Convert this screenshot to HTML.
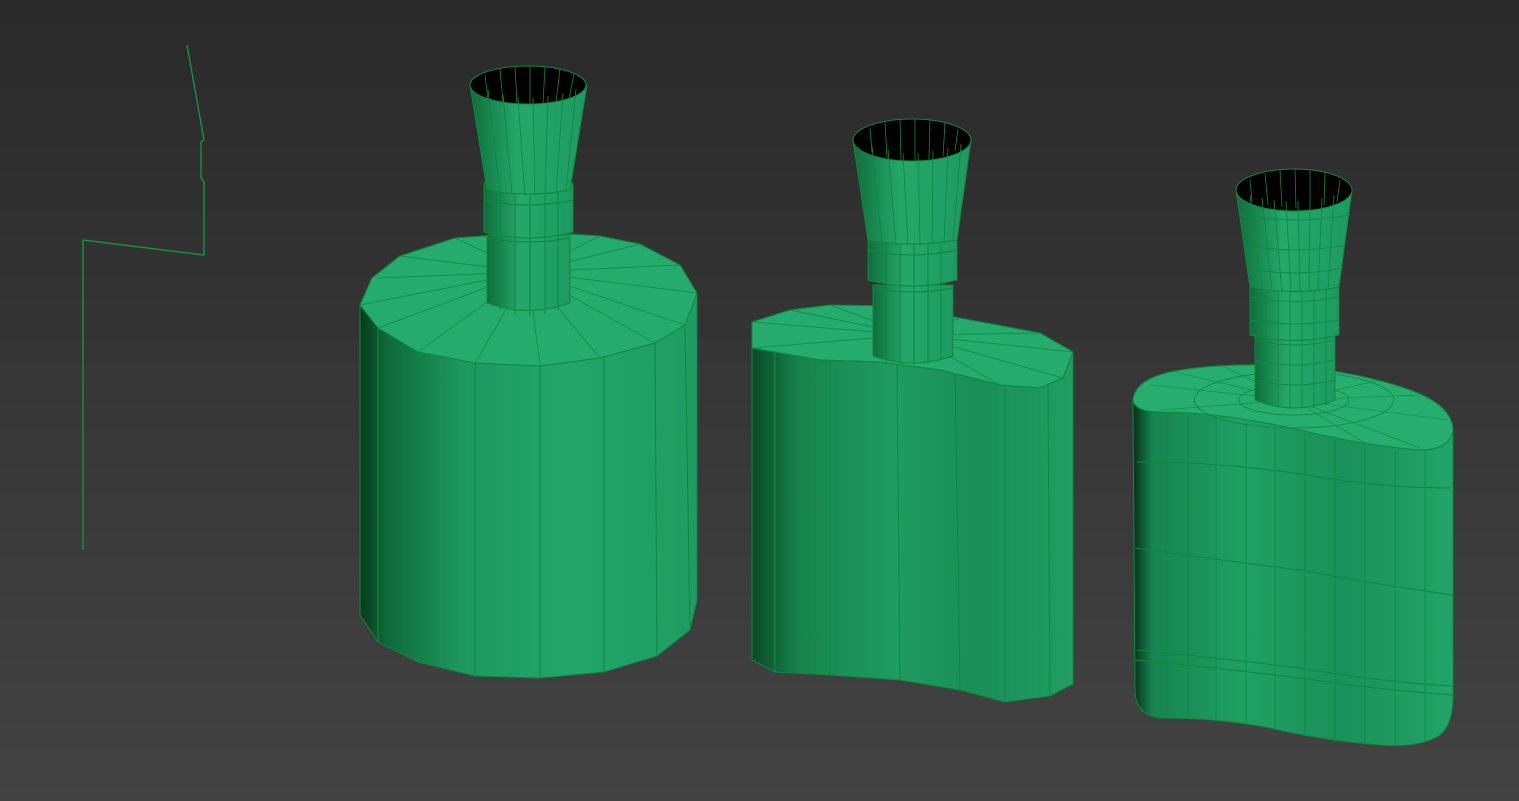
<!DOCTYPE html>
<html><head><style>html,body{margin:0;padding:0;width:1519px;height:801px;overflow:hidden;background:#333}</style></head><body>
<svg width="1519" height="801" viewBox="0 0 1519 801" xmlns="http://www.w3.org/2000/svg">
<defs>
<linearGradient id="bg" x1="0" y1="0" x2="0" y2="1"><stop offset="0" stop-color="#2a2a2a"/><stop offset="1" stop-color="#434343"/></linearGradient>
<linearGradient id="b1" x1="360" y1="0" x2="697" y2="0" gradientUnits="userSpaceOnUse"><stop offset="0" stop-color="#063a1c"/><stop offset="0.08" stop-color="#0e6a3a"/><stop offset="0.3" stop-color="#1e9860"/><stop offset="0.6" stop-color="#22a56a"/><stop offset="1" stop-color="#1f9c62"/></linearGradient>
<linearGradient id="b2" x1="752" y1="0" x2="1073" y2="0" gradientUnits="userSpaceOnUse"><stop offset="0" stop-color="#0a4a26"/><stop offset="0.15" stop-color="#17844e"/><stop offset="0.45" stop-color="#1f9c62"/><stop offset="0.7" stop-color="#1a8e58"/><stop offset="1" stop-color="#1f9e63"/></linearGradient>
<linearGradient id="b3" x1="1133" y1="0" x2="1453" y2="0" gradientUnits="userSpaceOnUse"><stop offset="0" stop-color="#053018"/><stop offset="0.06" stop-color="#178450"/><stop offset="0.35" stop-color="#20a064"/><stop offset="0.65" stop-color="#1b905a"/><stop offset="1" stop-color="#22a468"/></linearGradient>
<linearGradient id="nk" x1="0" y1="0" x2="1" y2="0"><stop offset="0" stop-color="#0f6e3c"/><stop offset="0.4" stop-color="#24a86a"/><stop offset="1" stop-color="#1e9a60"/></linearGradient>
</defs>
<rect width="1519" height="801" fill="url(#bg)"/>
<polyline points="187,45 204,140 201,142 201,178 204,182 204,255 83,240 83,550" fill="none" stroke="#109a44" stroke-width="1.3"/>
<g stroke="#0b8a3c" stroke-width="1">
<path d="M360,305 L360,615 L378,642 L418,662 L475,676 L540,678 L604,672 L657,656 L690,630 L697,600 L697,295 Z" fill="url(#b1)"/>
<path d="M360,305 L372,278 L400,256 L455,238 L540,232 L600,236 L640,244 L680,265 L697,293 L685,325 L655,343 L600,358 L540,366 L475,363 L418,352 L378,328 Z" fill="#25ab6d"/>
<path d="M378,328 L378,642 M418,352 L418,662 M475,363 L475,676 M540,366 L540,678 M604,356 L604,672 M655,343 L657,656 M685,325 L690,630" fill="none"/>
<path d="M528,272 L360,305 M528,272 L378,278 M528,272 L400,256 M528,272 L455,238 M528,272 L600,236 M528,272 L640,244 M528,272 L680,265 M528,272 L697,293 M528,272 L685,325 M528,272 L655,343 M528,272 L600,358 M528,272 L540,366 M528,272 L475,363 M528,272 L418,352 M528,272 L378,328" fill="none" stroke-width="0.7"/>
<path d="M487,235 L487,303 Q528,318 570,303 L570,235 Z" fill="url(#nk)"/>
<path d="M484,183 L484,232 Q528,244 573,232 L573,183 Z" fill="url(#nk)"/>
<path d="M484,200 Q528,210 573,200 M487,238 Q528,246 570,238 M500,190 L500,310 M515,190 L515,314 M530,190 L530,315 M545,190 L545,314 M558,190 L558,310" fill="none"/>
<path d="M470,85 L487,190 Q528,198 570,190 L587,85 Z" fill="url(#nk)"/>
<ellipse cx="528" cy="85" rx="58" ry="19" fill="#000"/>
<path d="M488,90 L500,193 M503,95 L512,195 M518,98 L525,196 M533,98 L535,196 M548,96 L545,195 M563,93 L556,193 M576,89 L566,191 M485,75 L488,100 M500,69 L503,103 M515,67 L517,104 M530,66 L530,104 M545,67 L543,104 M560,69 L556,102 M574,74 L569,99" fill="none" stroke-width="0.8"/>
<path d="M752,322 L752,660 L775,672 L830,675 L900,680 L960,690 L1005,702 L1050,696 L1073,684 L1073,352 Z" fill="url(#b2)"/>
<path d="M752,322 L790,310 L830,305 L900,306 L960,318 L1040,333 L1073,352 L1063,378 L1040,388 L1000,385 L940,370 L880,362 L820,360 L752,348 Z" fill="#25ab6d"/>
<path d="M752,348 L820,360 L880,362 L940,370 L1000,385 L1040,388 L1063,378 L1073,352" fill="none"/>
<path d="M775,352 L775,672 M830,360 L830,675 M897,364 L900,680 M955,373 L960,690 M1005,386 L1005,702 M1048,386 L1050,696" fill="none"/>
<path d="M912,335 L790,310 M912,335 L830,305 M912,335 L960,318 M912,335 L1040,333 M912,335 L1073,352 M912,335 L1063,378 M912,335 L1000,385 M912,335 L752,348 M912,335 L752,322" fill="none" stroke-width="0.7"/>
<path d="M873,285 L873,356 Q912,370 953,356 L953,285 Z" fill="url(#nk)"/>
<path d="M868,235 L868,280 Q912,292 957,280 L957,235 Z" fill="url(#nk)"/>
<path d="M868,250 Q912,260 957,250 M873,288 Q912,296 953,288 M886,240 L886,362 M900,242 L900,364 M914,242 L914,365 M928,242 L928,364 M941,240 L941,360" fill="none"/>
<path d="M853,140 L868,240 Q912,248 957,240 L971,140 Z" fill="url(#nk)"/>
<ellipse cx="912" cy="140" rx="59" ry="21" fill="#000"/>
<path d="M872,146 L882,243 M888,150 L896,245 M903,153 L908,246 M918,153 L920,246 M933,151 L932,245 M948,148 L944,243 M961,144 L953,241 M870,128 L872,152 M885,122 L887,157 M900,119 L901,160 M915,119 L915,160 M930,120 L929,159 M945,123 L943,156 M958,129 L955,151" fill="none" stroke-width="0.8"/>
<path d="M1133,400 Q1135,380 1170,372 Q1220,362 1290,366 Q1360,372 1410,390 Q1452,405 1453,430 L1453,700 Q1452,725 1440,735 Q1420,748 1380,745 Q1320,740 1270,728 Q1220,718 1160,718 Q1135,715 1135,690 Z" fill="url(#b3)"/>
<path d="M1133,400 Q1135,380 1170,372 Q1220,362 1290,366 Q1360,372 1410,390 Q1452,405 1453,430 Q1450,450 1420,450 Q1360,445 1300,430 Q1220,412 1160,412 Q1135,412 1133,400 Z" fill="#27ad70"/>
<ellipse cx="1294" cy="400" rx="100" ry="28" fill="none" stroke-width="0.8"/>
<ellipse cx="1294" cy="400" rx="55" ry="15" fill="none" stroke-width="0.8"/>
<path d="M1294,400 L1150,385 M1294,400 L1175,372 M1294,400 L1220,365 M1294,400 L1270,365 M1294,400 L1330,370 M1294,400 L1380,380 M1294,400 L1420,395 M1294,400 L1448,420 M1294,400 L1420,448 M1294,400 L1365,443 M1294,400 L1160,410" fill="none" stroke-width="0.6"/>
<path d="M1137,462 Q1220,462 1300,474 Q1380,488 1450,488 M1135,548 Q1220,560 1300,570 Q1380,585 1453,595 M1135,660 Q1220,668 1300,678 Q1380,690 1453,695 M1137,650 Q1220,658 1300,668 Q1380,682 1453,686" fill="none"/>
<path d="M1160,415 L1160,718 M1188,416 L1188,718 M1216,418 L1216,720 M1246,422 L1246,725 M1275,428 L1275,730 M1305,433 L1305,736 M1335,440 L1335,742 M1365,446 L1365,745 M1395,450 L1395,746 M1425,450 L1425,742" fill="none" stroke-width="0.8"/>
<path d="M1255,330 L1255,400 Q1294,416 1335,400 L1335,330 Z" fill="url(#nk)"/>
<path d="M1250,282 L1250,335 Q1294,346 1339,335 L1339,282 Z" fill="url(#nk)"/>
<path d="M1250,297 Q1294,306 1339,297 M1250,320 Q1294,328 1339,320 M1255,340 Q1294,350 1335,340 M1255,360 Q1294,370 1335,360 M1255,380 Q1294,390 1335,380 M1266,286 L1266,405 M1278,288 L1278,408 M1290,288 L1290,409 M1302,288 L1302,409 M1314,288 L1314,408 M1326,286 L1326,405" fill="none" stroke-width="0.8"/>
<path d="M1236,190 L1250,287 Q1294,296 1339,287 L1352,190 Z" fill="url(#nk)"/>
<path d="M1240,215 Q1294,225 1350,215 M1244,245 Q1294,255 1346,245 M1247,268 Q1294,278 1343,268" fill="none" stroke-width="0.8"/>
<ellipse cx="1294" cy="190" rx="58" ry="21" fill="#000"/>
<path d="M1250,195 L1262,290 M1262,198 L1272,291 M1274,200 L1282,292 M1286,201 L1291,292 M1298,201 L1300,292 M1310,200 L1309,292 M1322,198 L1318,291 M1334,195 L1328,290 M1250,180 L1252,202 M1265,173 L1268,205 M1280,170 L1282,207 M1295,169 L1296,208 M1310,170 L1310,207 M1325,173 L1324,205 M1340,180 L1337,202" fill="none" stroke-width="0.8"/>
</g>
</svg>
</body></html>
